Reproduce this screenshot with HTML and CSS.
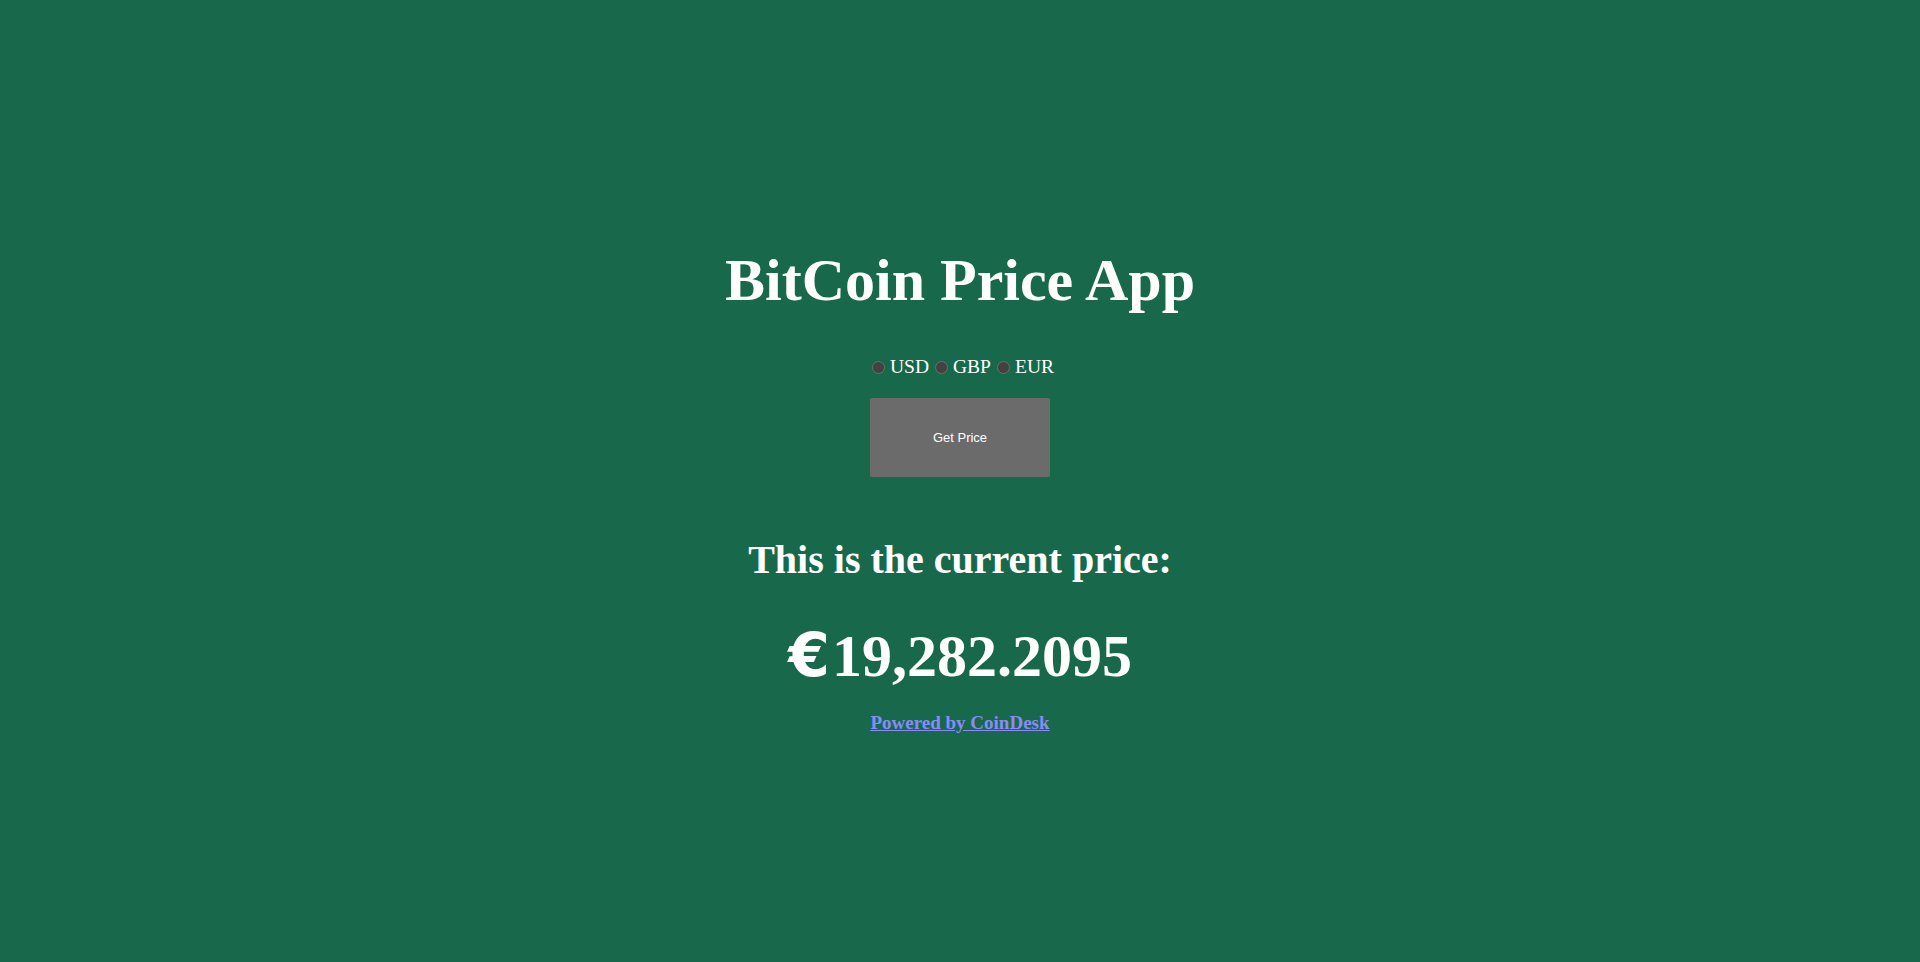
FILE: index.html
```html
<!DOCTYPE html>
<html>
<head>
<meta charset="utf-8">
<title>BitCoin Price App</title>
<link rel="stylesheet" href="styles.css">
</head>
<body>
<main class="app">
  <h1 class="title">BitCoin Price App</h1>
  <div class="currencies">
    <label class="opt"><span class="radio"></span>USD</label>
    <label class="opt"><span class="radio"></span>GBP</label>
    <label class="opt"><span class="radio"></span>EUR</label>
  </div>
  <button class="btn">Get Price</button>
  <h2 class="subtitle">This is the current price:</h2>
  <h1 class="price"><span class="euro">€</span>19,282.2095</h1>
  <a class="powered" href="#">Powered by CoinDesk</a>
</main>
</body>
</html>
```
FILE: styles.css
```css
html, body {
  margin: 0;
  padding: 0;
  height: 100%;
}
body {
  background: #18694b;
  color: #ffffff;
  font-family: "Liberation Serif", "Times New Roman", serif;
}
.app {
  display: flex;
  flex-direction: column;
  align-items: center;
  padding-top: 244px;
}
.title {
  margin: 0;
  font-size: 60px;
  line-height: 72px;
  font-weight: bold;
}
.currencies {
  display: flex;
  align-items: center;
  margin-top: 40px;
  font-size: 19.5px;
  line-height: 22px;
}
.opt {
  display: flex;
  align-items: center;
}
.radio {
  width: 11px;
  height: 11px;
  border-radius: 50%;
  background: #424242;
  border: 1px solid #6e6e6e;
  margin: 1px 5px 0 6px;
}
.btn {
  margin-top: 20px;
  width: 180px;
  height: 79px;
  background: #6b6b6b;
  border: none;
  border-radius: 2px;
  color: #ffffff;
  font-family: "Liberation Sans", Arial, sans-serif;
  font-size: 13px;
}
.subtitle {
  margin: 60px 0 0;
  font-size: 40px;
  line-height: 46px;
  font-weight: bold;
}
.price {
  margin: 35px 0 0;
  font-size: 60px;
  line-height: 74px;
  font-weight: bold;
}
.euro {
  font-family: "DejaVu Sans", sans-serif;
  margin-right: 2px;
}
.powered {
  margin-top: 19px;
  color: #8b8bf8;
  font-weight: bold;
  font-size: 19px;
}
```
